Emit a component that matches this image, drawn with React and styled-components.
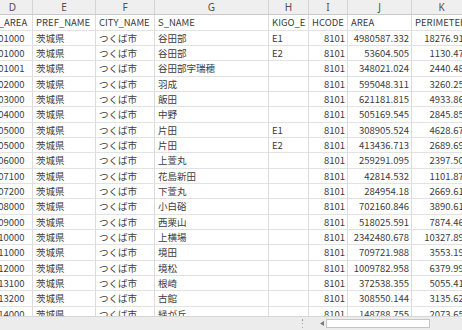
import React from 'react';
import styled, { createGlobalStyle } from 'styled-components';

const GlobalStyle = createGlobalStyle`
  html, body {
    margin: 0;
    padding: 0;
    background: #fff;
  }
  body {
    font-family: "Noto Sans CJK JP", "Noto Sans", sans-serif;
  }
`;

const ROW_H = 15.33;

const columns = [
  { key: 'D', width: 33, align: 'left', indent: -10 },
  { key: 'E', width: 63, align: 'left' },
  { key: 'F', width: 59, align: 'left' },
  { key: 'G', width: 114, align: 'left' },
  { key: 'H', width: 40, align: 'left' },
  { key: 'I', width: 39, align: 'right' },
  { key: 'J', width: 64, align: 'right' },
  { key: 'K', width: 60, align: 'right' },
];

const fieldNames = ['S_AREA', 'PREF_NAME', 'CITY_NAME', 'S_NAME', 'KIGO_E', 'HCODE', 'AREA', 'PERIMETER'];

const records = [
  ['001000', '谷田部', 'E1', '4980587.332', '18276.913'],
  ['001000', '谷田部', 'E2', '53604.505', '1130.472'],
  ['001001', '谷田部字瑞穂', '', '348021.024', '2440.487'],
  ['002000', '羽成', '', '595048.311', '3260.252'],
  ['003000', '飯田', '', '621181.815', '4933.866'],
  ['004000', '中野', '', '505169.545', '2845.858'],
  ['005000', '片田', 'E1', '308905.524', '4628.671'],
  ['005000', '片田', 'E2', '413436.713', '2689.694'],
  ['006000', '上萱丸', '', '259291.095', '2397.503'],
  ['007100', '花島新田', '', '42814.532', '1101.872'],
  ['007200', '下萱丸', '', '284954.18', '2669.615'],
  ['008000', '小白硲', '', '702160.846', '3890.614'],
  ['009000', '西栗山', '', '518025.591', '7874.463'],
  ['010000', '上横場', '', '2342480.678', '10327.891'],
  ['011000', '境田', '', '709721.988', '3553.197'],
  ['012000', '境松', '', '1009782.958', '6379.994'],
  ['013100', '根崎', '', '372538.355', '5055.418'],
  ['013200', '古館', '', '308550.144', '3135.623'],
  ['014000', '緑が丘', '', '148788.755', '2073.652'],
];

const Window = styled.div`
  width: 462px;
  height: 330px;
  overflow: hidden;
  display: flex;
  flex-direction: column;
  background: #fff;
`;

const SheetArea = styled.div`
  flex: 1;
  overflow: hidden;
`;

const Grid = styled.div`
  display: grid;
  grid-template-columns: ${(p) => p.cols};
  grid-auto-rows: ${ROW_H}px;
  width: max-content;
`;

const ColumnHead = styled.div`
  box-sizing: border-box;
  background: #efefef;
  border-right: 1px solid #d4d4d4;
  border-bottom: 1px solid #c9c9c9;
  color: #505050;
  font-size: 10px;
  display: flex;
  align-items: center;
  justify-content: center;
  padding-right: ${(p) => p.shift || 0}px;
  font-family: "Noto Sans", "Noto Sans CJK JP", sans-serif;
`;

const Cell = styled.div`
  box-sizing: border-box;
  border-right: 1px solid #dcdcdc;
  border-bottom: 1px solid #e2e2e2;
  color: #3c3c3c;
  font-size: 9.5px;
  line-height: ${ROW_H - 1}px;
  white-space: nowrap;
  overflow: hidden;
  text-align: ${(p) => p.align};
  padding: 0 2px 0 3px;
  text-indent: ${(p) => p.indent || 0}px;
`;

const StatusBar = styled.div`
  height: 14px;
  flex: none;
  background: #ececec;
  border-top: 1px solid #d6d6d6;
  box-sizing: border-box;
  display: flex;
  align-items: center;
  padding-left: 301px;
`;

const Grip = styled.div`
  width: 3px;
  height: 9px;
  display: flex;
  flex-direction: column;
  justify-content: space-between;
  align-items: center;
  margin-right: 14px;

  span {
    width: 1.5px;
    height: 1.5px;
    border-radius: 50%;
    background: #8a8a8a;
  }
`;

const ArrowButton = styled.div`
  width: 7px;
  height: 9px;
  display: flex;
  align-items: center;
  justify-content: center;
  margin-right: 1px;
`;

const Track = styled.div`
  width: 104px;
  height: 9px;
  background: #fff;
  border: 1px solid #c6c6c6;
  box-sizing: border-box;
`;

export default function App() {
  const cols = columns.map((c) => `${c.width}px`).join(' ');
  const rows = [
    fieldNames,
    ...records.map((r) => [r[0], '茨城県', 'つくば市', r[1], r[2], '8101', r[3], r[4]]),
  ];

  return (
    <Window>
      <GlobalStyle />
      <SheetArea>
        <Grid cols={cols}>
          {columns.map((c) => (
            <ColumnHead key={c.key} shift={c.key === 'D' ? 7 : 0}>
              {c.key}
            </ColumnHead>
          ))}
          {rows.map((row, ri) =>
            row.map((value, ci) => {
              const col = columns[ci];
              const align = ri === 0 ? 'left' : col.align;
              return (
                <Cell key={`${ri}-${ci}`} align={align} indent={col.indent}>
                  {value}
                </Cell>
              );
            })
          )}
        </Grid>
      </SheetArea>
      <StatusBar>
        <Grip>
          <span />
          <span />
          <span />
        </Grip>
        <ArrowButton>
          <svg width="4" height="5" viewBox="0 0 4 5">
            <path d="M4 0 L0 2.5 L4 5 Z" fill="#7a7a7a" />
          </svg>
        </ArrowButton>
        <Track />
      </StatusBar>
    </Window>
  );
}
